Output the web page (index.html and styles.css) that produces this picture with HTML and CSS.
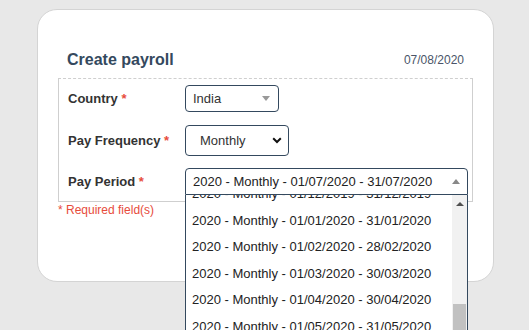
FILE: index.html
```html
<!DOCTYPE html>
<html lang="en">
<head>
  <meta charset="UTF-8" />
  <title>Create payroll</title>
  <link rel="stylesheet" href="styles.css">
</head>
<body>
  <div class="card">
    <div class="card-head">
      <h2 class="title">Create payroll</h2>
      <span class="date">07/08/2020</span>
    </div>

    <!-- payroll fields -->
    <div class="fields">
      <div class="row">
        <label class="label">Country <span class="req">*</span></label>
        <div class="select select-country">
          <span class="value">India</span>
          <span class="caret caret-down"></span>
        </div>
      </div>
      <div class="row row-freq">
        <label class="label">Pay Frequency <span class="req">*</span></label>
        <div class="select select-freq">
          <span class="value">Monthly</span>
          <svg class="chevron" width="10" height="7" viewBox="0 0 10 7">
            <path d="M1.2 1.3 L5 5 L8.8 1.3" fill="none" stroke="#111" stroke-width="2" />
          </svg>
        </div>
      </div>
      <div class="row">
        <label class="label">Pay Period <span class="req">*</span></label>
        <div class="period">
          <div class="select select-period">
            <span class="value">2020 - Monthly - 01/07/2020 - 31/07/2020</span>
            <span class="caret caret-up"></span>
          </div>
          <!-- open option list -->
          <div class="dropdown">
            <div class="options">
              <div class="option first">2020 - Monthly - 01/12/2019 - 31/12/2019</div>
              <div class="option">2020 - Monthly - 01/01/2020 - 31/01/2020</div>
              <div class="option">2020 - Monthly - 01/02/2020 - 28/02/2020</div>
              <div class="option">2020 - Monthly - 01/03/2020 - 30/03/2020</div>
              <div class="option">2020 - Monthly - 01/04/2020 - 30/04/2020</div>
              <div class="option">2020 - Monthly - 01/05/2020 - 31/05/2020</div>
              <div class="option">2020 - Monthly - 01/06/2020 - 30/06/2020</div>
              <div class="option">2020 - Monthly - 01/07/2020 - 31/07/2020</div>
            </div>
            <div class="scrollbar">
              <span class="scroll-up"></span>
              <span class="thumb"></span>
            </div>
          </div>
        </div>
      </div>
    </div>

    <div class="required-note">* Required field(s)</div>
  </div>
</body>
</html>
```

FILE: styles.css
```css
html {
  overflow: hidden;
}
body {
  font-family: "Liberation Sans", Arial, sans-serif;
  background: #e8e8e8;
  margin: 0;
  padding: 9px 0 0 37px;
  height: 330px;
  box-sizing: border-box;
}
.card {
  width: 457px;
  height: 273px;
  box-sizing: border-box;
  background: #fff;
  border: 1px solid #d4d4d4;
  border-radius: 20px;
  padding: 40px 20px 0;
}
.card-head {
  display: flex;
  align-items: center;
  justify-content: space-between;
  padding: 0 9px;
  height: 20px;
  margin-bottom: 8px;
}
.title {
  margin: 0;
  font-size: 16px;
  line-height: 20px;
  font-weight: bold;
  color: #34495e;
}
.date {
  font-size: 12px;
  color: #4a5568;
}
/* dashed top, solid other sides */
.fields {
  border: 1px solid #cfcfcf;
  border-top: 1px dashed #cfcfcf;
  padding: 6px 9px 6px;
  display: flex;
  flex-direction: column;
  gap: 12px;
}
.row {
  display: flex;
  align-items: center;
}
.row-freq {
  margin-top: 1px;
}
.label {
  flex-shrink: 0;
  width: 117px;
  font-size: 13px;
  font-weight: bold;
  color: #333;
}
.req {
  color: #e74c3c;
}
.select {
  flex-shrink: 0;
  display: flex;
  align-items: center;
  justify-content: space-between;
  box-sizing: border-box;
  height: 27px;
  border: 1px solid #34495e;
  border-radius: 4px;
  background: #fff;
  font-size: 13px;
  color: #333;
  padding: 0 8px 0 7px;
}
.select-country {
  width: 94px;
}
.select-freq {
  width: 104px;
  height: 31px;
  padding: 0 6px 0 14px;
}
.chevron {
  display: block;
}
.period {
  position: relative;
  flex-shrink: 0;
}
.select-period {
  width: 283px;
  color: #222;
  border-radius: 4px 4px 0 0;
  padding-right: 7px;
}
.caret {
  width: 0;
  height: 0;
  border-left: 4px solid transparent;
  border-right: 4px solid transparent;
}
.caret-down {
  border-top: 5px solid #999;
}
.caret-up {
  border-bottom: 5px solid #888;
}
.dropdown {
  position: absolute;
  top: 100%;
  left: 0;
  width: 283px;
  height: 200px;
  box-sizing: border-box;
  display: flex;
  background: #fff;
  border: 1px solid #34495e;
  border-top: 0;
  z-index: 2;
}
.options {
  flex: 1;
  overflow: hidden;
}
.option {
  height: 26.5px;
  line-height: 26.5px;
  padding-left: 6px;
  font-size: 13px;
  color: #222;
  white-space: nowrap;
}
.option.first {
  margin-top: -14px;
}
.scrollbar {
  width: 15px;
  background: #f1f1f1;
  display: flex;
  flex-direction: column;
  align-items: center;
  padding-top: 7px;
  box-sizing: border-box;
}
.scroll-up {
  width: 0;
  height: 0;
  border-left: 4px solid transparent;
  border-right: 4px solid transparent;
  border-bottom: 4px solid #505050;
}
.thumb {
  width: 13px;
  height: 100px;
  margin-top: 98px;
  background: #c1c1c1;
}
.required-note {
  font-size: 12px;
  line-height: 16px;
  color: #e74c3c;
}
```
